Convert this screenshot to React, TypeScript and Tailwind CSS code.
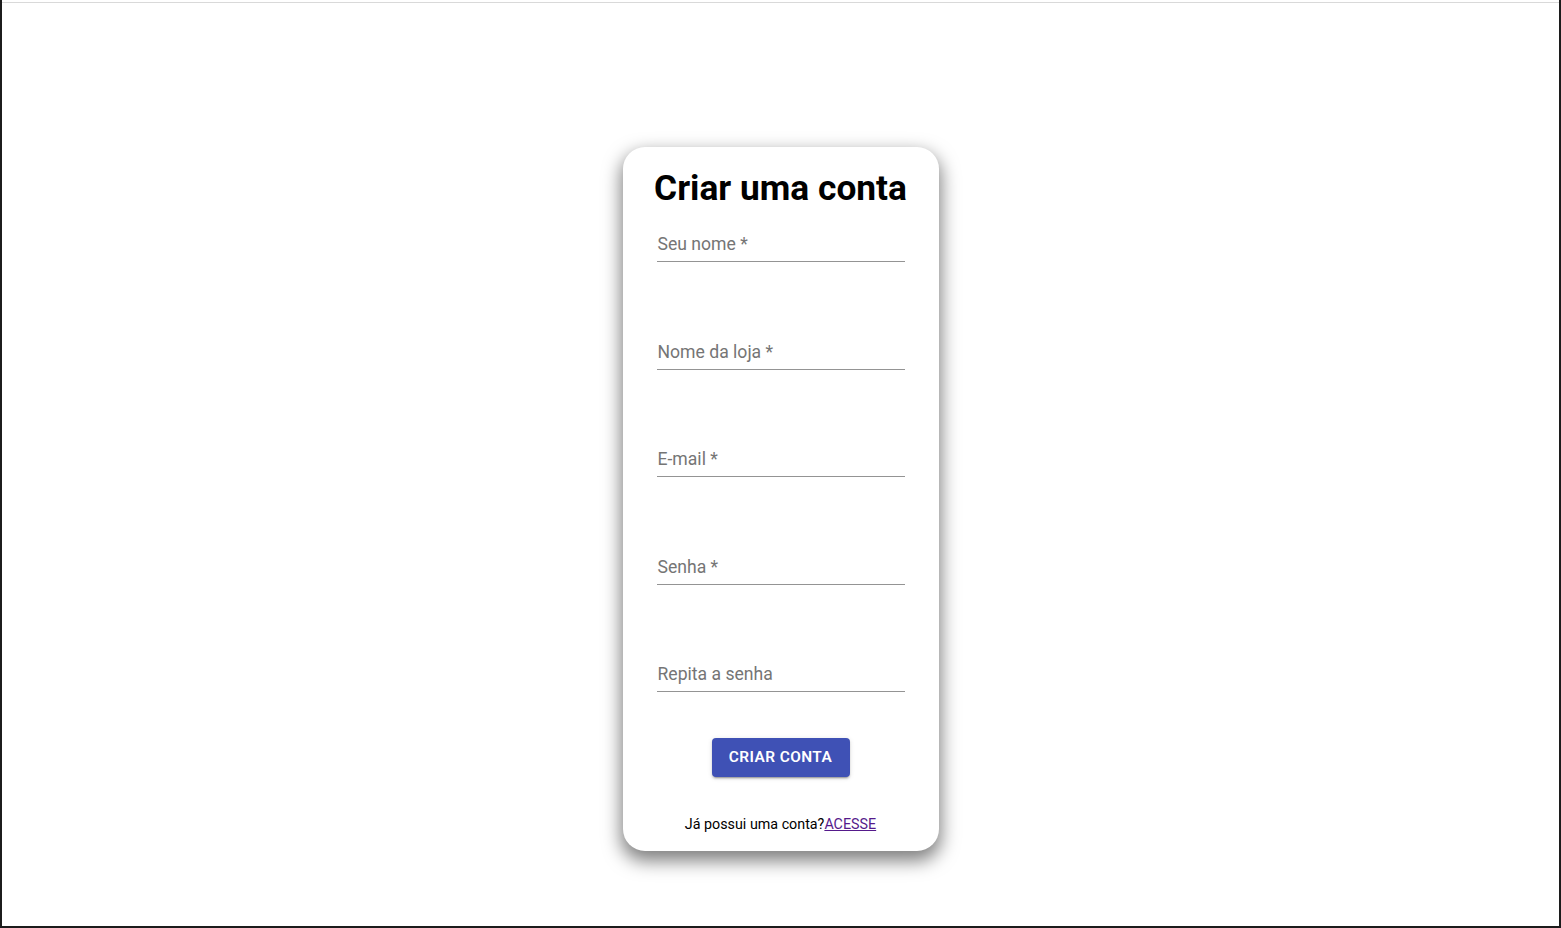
const fields = [
  { label: 'Seu nome *', gap: '' },
  { label: 'Nome da loja *', gap: 'mt-[80px]' },
  { label: 'E-mail *', gap: 'mt-[79px]' },
  { label: 'Senha *', gap: 'mt-[80px]' },
  { label: 'Repita a senha', gap: 'mt-[79px]' }
];

function Field({ label, gap }: { label: string; gap: string }) {
  return (
    <div className={`${gap} w-[248px] border-b border-[#949494] pb-[6px]`}>
      <span className="block pl-px text-[17.6px] leading-[21px] text-[#757575]">{label}</span>
    </div>
  );
}

export default function App() {
  return (
    <div
      className="relative flex h-[928px] w-full items-start justify-center border-x-2 border-b-2 border-[#1c1c1c] bg-white pt-[147px]"
      style={{ fontFamily: 'Roboto, "Liberation Sans", sans-serif' }}
    >
      <div className="absolute left-0 right-0 top-[2px] h-px bg-[#d9d9d9]" />
      <div className="flex w-[316px] flex-col items-center rounded-[22px] bg-white px-[34px] pb-[16px] pt-[17px] shadow-[0_8px_18px_2px_rgba(0,0,0,0.5)]">
        <h1 className="-mx-[20px] whitespace-nowrap text-[35.3px] font-bold leading-[48px] text-black">Criar uma conta</h1>

        <form className="mt-[22px] flex flex-col">
          {fields.map((f) => (
            <Field key={f.label} label={f.label} gap={f.gap} />
          ))}
        </form>

        <button
          type="button"
          className="mt-[46px] h-[39px] w-[138px] shrink-0 rounded-[4px] bg-[#3f51b5] text-[15.4px] font-semibold uppercase tracking-[0.44px] text-white shadow-[0_3px_1px_-2px_rgba(0,0,0,0.2),0_2px_2px_0_rgba(0,0,0,0.14),0_1px_5px_0_rgba(0,0,0,0.12)]"
        >
          Criar conta
        </button>

        <p className="mt-[36px] whitespace-nowrap text-[14.3px] leading-[22px] text-black">
          Já possui uma conta?
          <a href="#" className="text-[#551a8b] underline">
            ACESSE
          </a>
        </p>
      </div>
    </div>
  );
}
